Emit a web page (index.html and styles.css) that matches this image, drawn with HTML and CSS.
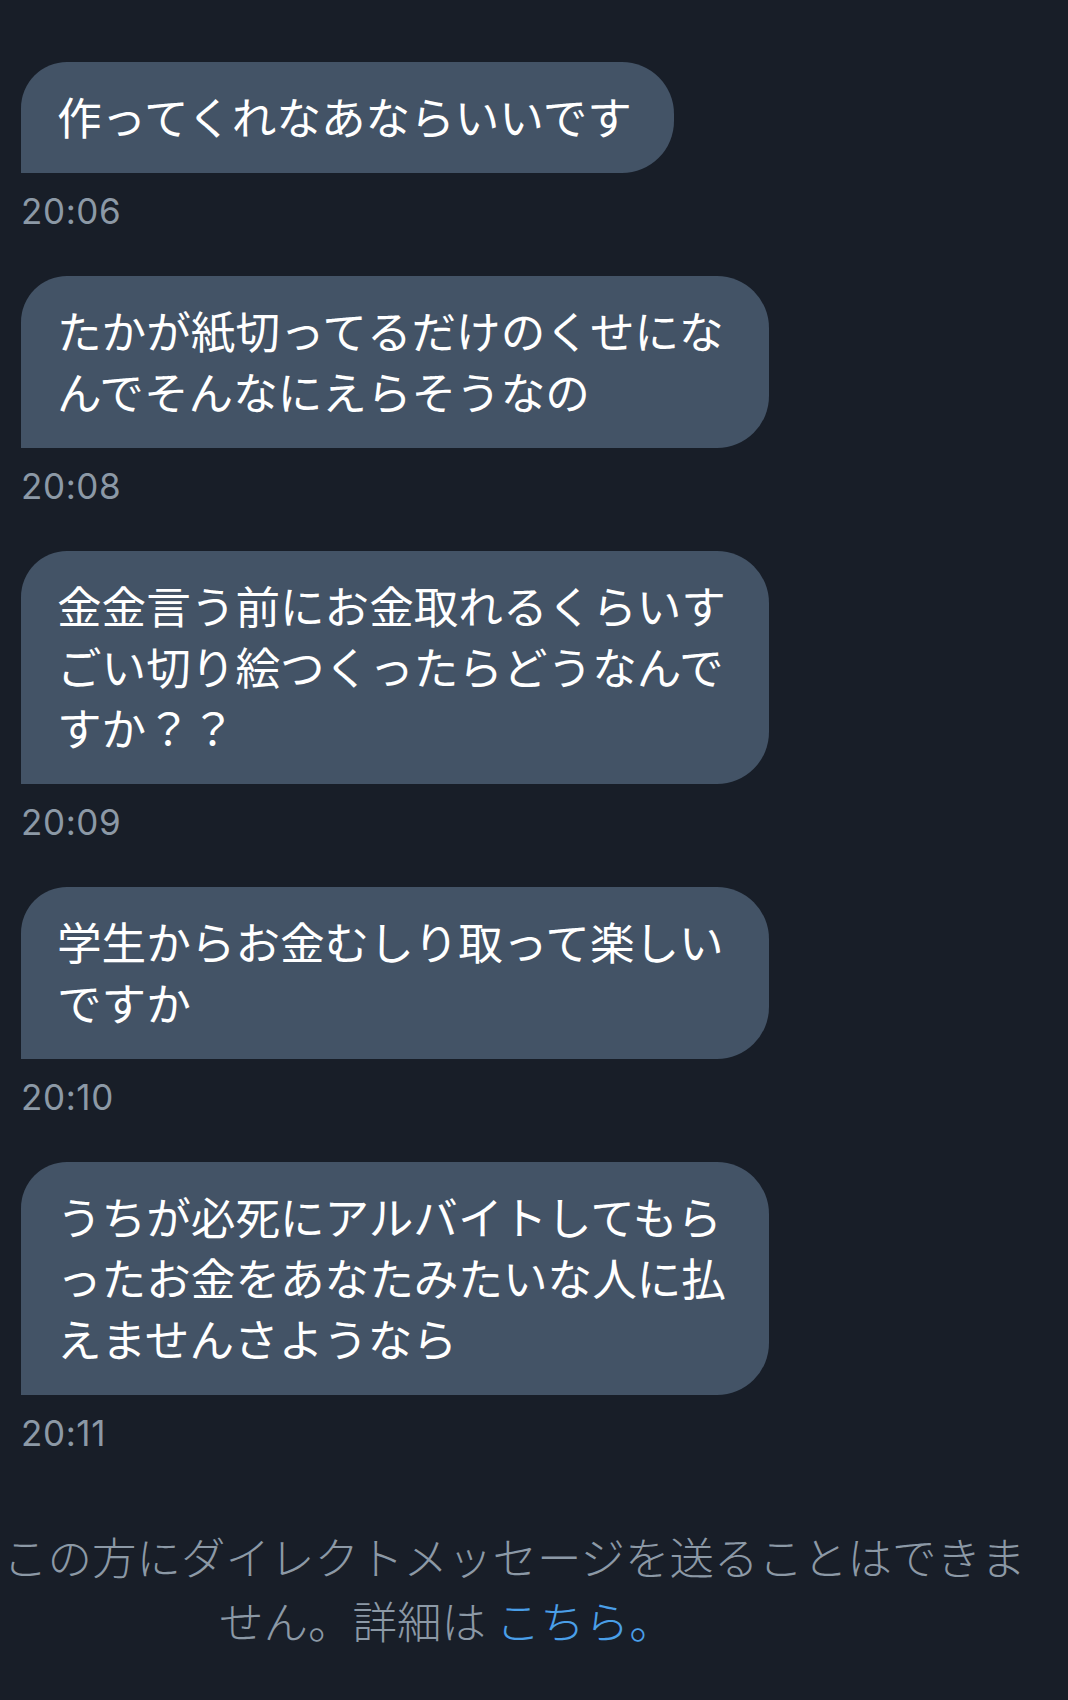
FILE: index.html
```html
<!DOCTYPE html>
<html lang="ja">
<head>
    <meta charset="UTF-8">
    <meta name="viewport" content="width=device-width, initial-scale=1.0">
    <title>メッセージ</title>
    <link rel="stylesheet" href="styles.css">
</head>
<body>
    <div class="thread">
        <div class="message">
            <div class="bubble">作ってくれなあならいいです</div>
            <div class="time">20:06</div>
        </div>

        <div class="message">
            <div class="bubble">たかが紙切ってるだけのくせになんでそんなにえらそうなの</div>
            <div class="time">20:08</div>
        </div>

        <div class="message">
            <div class="bubble">金金言う前にお金取れるくらいすごい切り絵つくったらどうなんですか？？</div>
            <div class="time">20:09</div>
        </div>

        <div class="message">
            <div class="bubble">学生からお金むしり取って楽しいですか</div>
            <div class="time">20:10</div>
        </div>

        <div class="message">
            <div class="bubble">うちが必死にアルバイトしてもらったお金をあなたみたいな人に払えませんさようなら</div>
            <div class="time">20:11</div>
        </div>
    </div>

    <p class="notice">
        <span class="notice-line">この方にダイレクトメッセージを送ることはできま</span>
        <span class="notice-line notice-line-second">せん。詳細は <a href="#" class="notice-link">こちら。</a></span>
    </p>
</body>
</html>
```

FILE: styles.css
```css
* {
    margin: 0;
    padding: 0;
    box-sizing: border-box;
}

body {
    background: #181e28;
    font-family: "Noto Sans CJK JP", sans-serif;
    color: #ffffff;
    min-height: 100vh;
}

.thread {
    padding: 62px 0 0 21px;
}

.message {
    margin-bottom: 45px;
}

.message:last-child {
    margin-bottom: 0;
}

.bubble {
    width: fit-content;
    max-width: 748px;
    background: #435366;
    border-radius: 46px 52px 52px 0;
    padding: 23px 42px 27px 36px;
    font-size: 44.6px;
    line-height: 61px;
    line-break: anywhere;
}

.time {
    margin-top: 18px;
    font-family: Inter, "Liberation Sans", sans-serif;
    font-size: 35px;
    letter-spacing: 0.6px;
    line-height: 40px;
    color: #8c99a6;
}

.notice {
    margin-top: 71px;
    font-size: 44.5px;
    font-weight: 300;
    line-height: 64px;
    color: #8c99a6;
}

.notice-line {
    display: block;
    white-space: nowrap;
    padding-left: 3px;
}

.notice-line-second {
    padding-left: 219px;
}

.notice-link {
    color: #4a9fe8;
    text-decoration: none;
}
```
